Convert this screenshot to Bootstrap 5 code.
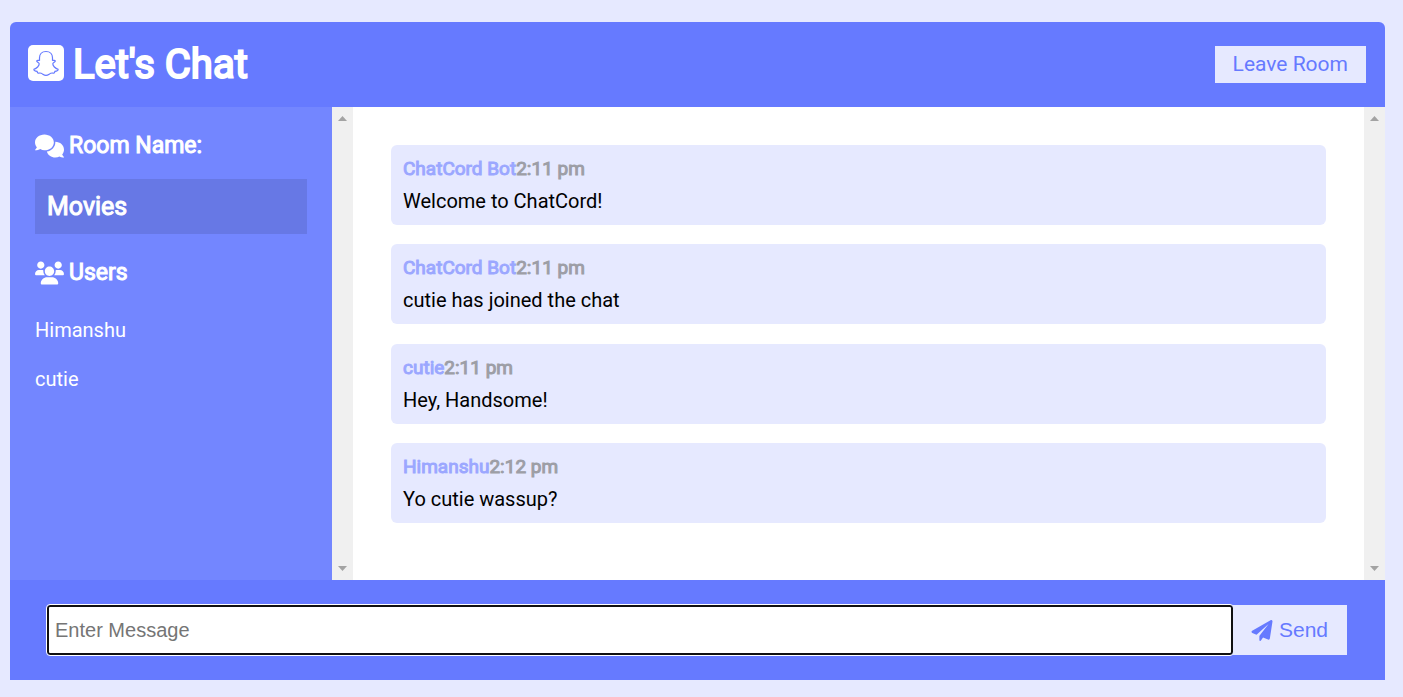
<!DOCTYPE html>
<html lang="en">
<head>
<meta charset="utf-8">
<meta name="viewport" content="width=device-width, initial-scale=1">
<title>Let's Chat</title>
<link href="https://cdn.jsdelivr.net/npm/bootstrap@5.3.0/dist/css/bootstrap.min.css" rel="stylesheet">
<style>
:root { --chat-main: #667aff; --chat-side: #7386ff; --chat-light: #e6e9ff; }
body { background: var(--chat-light); color: #000; font-family: Roboto, sans-serif; font-size: 20px; line-height: 32px; }
.chat-shell { margin: 22px 18px 17px 10px; min-height: calc(100vh - 39px); }
.chat-header { background: var(--chat-main); padding: 0 19px 0 18px; height: 85px; border-radius: 6px 6px 0 0; }
.heavy { font-weight: 400; -webkit-text-stroke: 1px currentColor; margin: 0; }
.chat-title { font-size: 40px; line-height: 48px; -webkit-text-stroke-width: 2px; }
.chat-title svg { width: 36px; height: 36px; margin: 0 9px 4px 0; }
.chat-btn { background: var(--chat-light); color: var(--chat-main); border: 0; border-radius: 0; font-size: 21px; }
.chat-leave { padding: 6px 18px; line-height: 25px; }
.chat-side { background: var(--chat-side); width: 322px; padding: 24px 25px; }
.side-title { font-size: 23px; line-height: 30px; }
.side-title svg { width: 29px; height: 24px; margin-right: 5px; }
.room-box { background: rgba(0, 0, 0, .1); font-size: 25px; line-height: 31px; padding: 12px; margin: 18px 0 24px; }
.user-list { margin-top: 18px; }
.user-list li { padding: 8px 0; line-height: 33px; }
.scroll-track { width: 21px; background: #f0f0f0; padding: 9px 0; }
.scroll-track svg { width: 9px; height: 5px; fill: #a3a3a3; }
.chat-log { background: #fff; padding: 38px 38px 57px; gap: 19px; }
.msg { background: var(--chat-light); border-radius: 6px; padding: 8px 12px; }
.msg-meta { font-size: 19px; line-height: 32px; color: #9ba7ff; }
.msg-meta time { color: #9d9ea6; }
.chat-footer { background: var(--chat-main); padding: 25px 38px 25px 37px; }
.chat-input { height: 50px; border: 2px solid #101010; border-radius: 3px; outline: 1px solid #fff; padding: 0 6px; font-family: "Liberation Sans", sans-serif; font-size: 20px; }
.chat-input::placeholder { color: #757575; }
.chat-send { font-family: "Liberation Sans", sans-serif; padding: 0 19px 0 18px; }
.chat-send svg { width: 22px; height: 21px; margin-right: 6px; }
</style>
</head>
<body>
<div class="chat-shell d-flex flex-column">
  <header class="chat-header d-flex justify-content-between align-items-center">
    <h1 class="chat-title heavy text-white d-flex align-items-center">
      <svg viewBox="0 0 36 36" aria-hidden="true"><rect width="36" height="36" rx="5" fill="#fff"/><path d="M18 6.500c-4.300 0-6.500 3-6.500 6.200v2.600c-.8.500-2.300-.4-2.800.6-.4 1.100 2.300 1.600 2.500 2.900.1 1.900-2.500 4.700-5.300 5.500-.5 1.300 1.700 1.800 3.200 2.100.3.700.2 1.400.7 1.600.8.300 2-.3 3.400.2 1.600.6 2.600 2.200 4.800 2.200s3.200-1.600 4.800-2.200c1.400-.5 2.600.1 3.400-.2.500-.2.400-.9.700-1.600 1.500-.3 3.700-.8 3.200-2.100-2.800-.8-5.400-3.600-5.300-5.500.2-1.300 2.900-1.800 2.500-2.900-.5-1-2-.1-2.800-.6v-2.600c0-3.200-2.200-6.200-6.500-6.200z" fill="none" stroke="#667aff" stroke-width="1.200"/></svg>Let's Chat</h1>
    <button type="button" class="chat-btn chat-leave">Leave Room</button>
  </header>
  <main class="d-flex flex-grow-1">
    <aside class="chat-side text-white flex-shrink-0">
      <h2 class="side-title heavy d-flex align-items-center"><svg viewBox="0 0 640 512" fill="#fff" aria-hidden="true"><path d="M416 176C416 78.800 322.900 0 208 0S0 78.800 0 176c0 39.570 15.620 75.960 41.670 105.400c-16.390 32.760-39.230 57.320-39.590 57.680c-2.100 2.205-2.670 5.475-1.441 8.354C1.900 350.300 4.602 352 7.660 352c38.350 0 76.760-11.120 109.400-27.810C144.900 340.600 175.800 352 208 352C322.900 352 416 273.200 416 176zM599.600 443.700C624.800 413.900 640 376.600 640 336C640 238.800 554 160 448 160c-.3145 0-.6191 .041-.9336 .043C447.500 165.300 448 170.600 448 176c0 98.620-79.680 181.200-186.100 202.500C282.700 455.100 357.100 512 448 512c33.690 0 65.320-8.008 92.850-21.980C565.200 502 596.100 512 632.300 512c3.059 0 5.760-1.725 7.020-4.605c1.229-2.879 .6582-6.148-1.441-8.354C637.600 498.700 615.900 475.300 599.600 443.700z"/></svg>Room Name:</h2>
      <div class="room-box"><div class="heavy">Movies</div></div>
      <h2 class="side-title heavy d-flex align-items-center"><svg viewBox="0 0 640 512" fill="#fff" aria-hidden="true"><path d="M319.900 320c57.410 0 103.100-46.560 103.100-104c0-57.440-46.540-104-103.100-104c-57.410 0-103.100 46.560-103.100 104C215.900 273.400 262.500 320 319.900 320zM369.900 352H270.100C191.600 352 128 411.700 128 485.300C128 500.100 140.700 512 156.400 512h327.200C499.300 512 512 500.100 512 485.300C512 411.700 448.400 352 369.900 352zM512 160c44.180 0 80-35.820 80-80S556.200 0 512 0c-44.180 0-80 35.820-80 80S467.800 160 512 160zM183.900 216c0-5.449 .9824-10.630 1.609-15.910C174.600 194.100 162.600 192 149.900 192H88.080C39.440 192 0 233.800 0 285.300C0 295.600 7.887 304 17.620 304h199.500C196.700 280.200 183.900 249.700 183.900 216zM128 160c44.180 0 80-35.820 80-80S172.200 0 128 0C83.820 0 48 35.820 48 80S83.820 160 128 160zM551.900 192h-61.840c-12.800 0-24.880 3.037-35.860 8.240C454.800 205.500 455.800 210.600 455.800 216c0 33.710-12.780 64.210-33.160 88h199.700C632.100 304 640 295.600 640 285.300C640 233.800 600.600 192 551.900 192z"/></svg>Users</h2>
      <ul class="user-list list-unstyled mb-0">
        <li>Himanshu</li>
        <li>cutie</li>
      </ul>
    </aside>
    <div class="scroll-track d-flex flex-column justify-content-between align-items-center flex-shrink-0" aria-hidden="true">
      <svg viewBox="0 0 9 5"><path d="M0 5h9L4.500 0z"/></svg>
      <svg viewBox="0 0 9 5"><path d="M0 0h9L4.500 5z"/></svg>
    </div>
    <section class="chat-log d-flex flex-column justify-content-between flex-grow-1">
      <article class="msg"><p class="msg-meta heavy">ChatCord Bot<time>2:11 pm</time></p><p class="mb-0">Welcome to ChatCord!</p></article>
      <article class="msg"><p class="msg-meta heavy">ChatCord Bot<time>2:11 pm</time></p><p class="mb-0">cutie has joined the chat</p></article>
      <article class="msg"><p class="msg-meta heavy">cutie<time>2:11 pm</time></p><p class="mb-0">Hey, Handsome!</p></article>
      <article class="msg"><p class="msg-meta heavy">Himanshu<time>2:12 pm</time></p><p class="mb-0">Yo cutie wassup?</p></article>
    </section>
    <div class="scroll-track d-flex flex-column justify-content-between align-items-center flex-shrink-0" aria-hidden="true">
      <svg viewBox="0 0 9 5"><path d="M0 5h9L4.500 0z"/></svg>
      <svg viewBox="0 0 9 5"><path d="M0 0h9L4.500 5z"/></svg>
    </div>
  </main>
  <footer class="chat-footer">
    <form class="d-flex">
      <input type="text" class="chat-input flex-grow-1" placeholder="Enter Message" aria-label="Enter Message">
      <button type="button" class="chat-btn chat-send d-flex align-items-center"><svg viewBox="0 0 512 512" fill="currentColor" aria-hidden="true"><path d="M511.600 36.860l-64 415.100c-1.500 9.734-7.375 18.220-15.970 23.050c-4.844 2.719-10.270 4.097-15.680 4.097c-4.188 0-8.319-.8154-12.290-2.472l-122.600-51.100l-50.860 76.290C226.300 508.500 219.800 512 212.800 512C201.300 512 192 502.700 192 491.200v-96.180c0-7.115 2.372-14.030 6.742-19.640L416 96l-293.700 264.300L19.690 317.500C8.438 312.800 .8125 302.200 .0625 289.100s5.469-23.720 16.060-29.770l448-255.100c10.690-6.109 23.880-5.547 34 1.406S513.500 24.720 511.600 36.860z"/></svg>Send</button>
    </form>
  </footer>
</div>
<script src="https://cdn.jsdelivr.net/npm/bootstrap@5.3.0/dist/js/bootstrap.bundle.min.js"></script>
</body>
</html>
